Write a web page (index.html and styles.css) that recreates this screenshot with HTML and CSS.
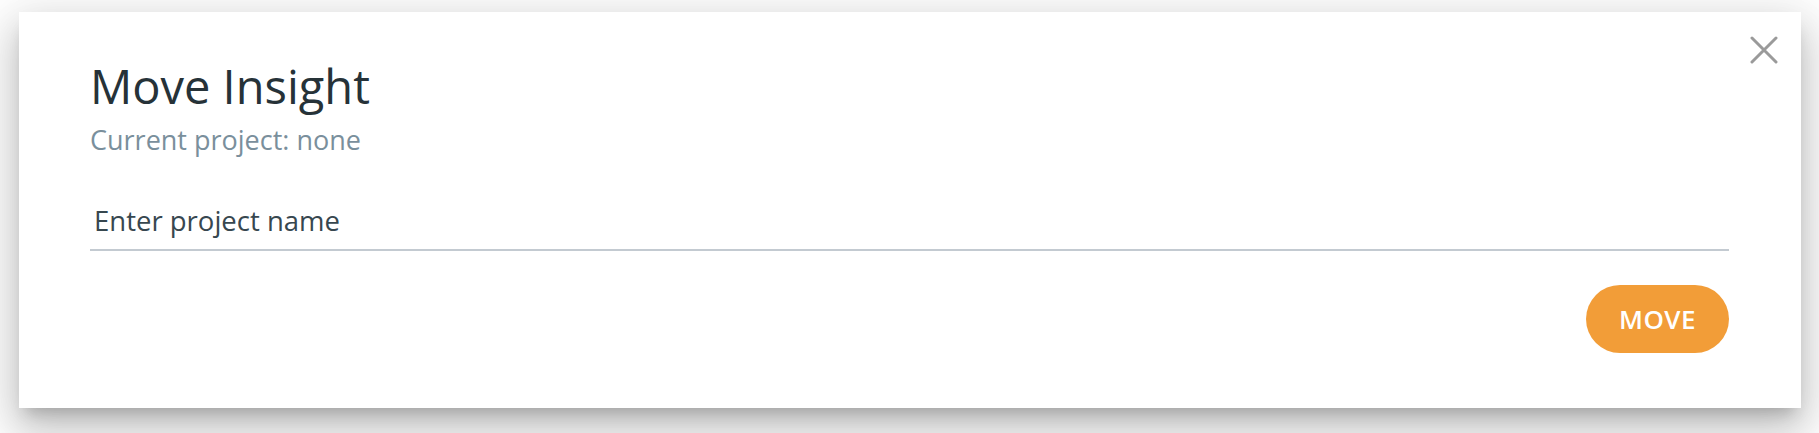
FILE: index.html
```html
<!DOCTYPE html>
<html>
<head>
<meta charset="utf-8">
<link rel="stylesheet" href="styles.css">
</head>
<body>
<div class="dialog">
  <button class="close" aria-label="Close">
    <svg width="28" height="28" viewBox="0 0 28 28"><path d="M2 2 L26 26 M26 2 L2 26" stroke="#9a9a9a" stroke-width="3" stroke-linecap="round"/></svg>
  </button>
  <h1 class="title">Move Insight</h1>
  <div class="subtitle">Current project: none</div>
  <div class="field">
    <div class="input">Enter project name</div>
  </div>
  <div class="actions">
    <button class="move">MOVE</button>
  </div>
</div>
</body>
</html>
```
FILE: styles.css
```css
html, body {
  margin: 0;
  padding: 0;
  background: #ffffff;
}
body {
  padding: 12px 18px 25px 19px;
  font-family: "Open Sans", "Liberation Sans", sans-serif;
}
.dialog {
  position: relative;
  box-sizing: border-box;
  width: 1782px;
  height: 396px;
  background: #fff;
  padding: 44px 72px 0 71px;
  box-shadow: 0 11px 15px -7px rgba(0,0,0,.2), 0 24px 38px 3px rgba(0,0,0,.14), 0 9px 46px 8px rgba(0,0,0,.12);
}
.close {
  position: absolute;
  top: 18px;
  right: 17px;
  width: 40px;
  height: 40px;
  border: 0;
  background: transparent;
  padding: 0;
  display: flex;
  align-items: center;
  justify-content: center;
}
.title {
  margin: 0;
  font-weight: 400;
  font-size: 47px;
  line-height: 60px;
  color: #263238;
}
.subtitle {
  margin-top: 6px;
  font-size: 27px;
  line-height: 36px;
  color: #7a8f9c;
}
.field {
  margin-top: 43px;
  border-bottom: 2px solid #c3cad1;
}
.input {
  padding: 0 0 8px 4px;
  font-size: 27.5px;
  line-height: 40px;
  color: #37474f;
}
.actions {
  display: flex;
  justify-content: flex-end;
  margin-top: 34px;
}
.move {
  width: 143px;
  height: 68px;
  border: 0;
  border-radius: 34px;
  background: #f29d38;
  color: #fff;
  font-family: "Open Sans", "Liberation Sans", sans-serif;
  font-weight: 600;
  font-size: 26px;
  letter-spacing: 0.5px;
}
```
